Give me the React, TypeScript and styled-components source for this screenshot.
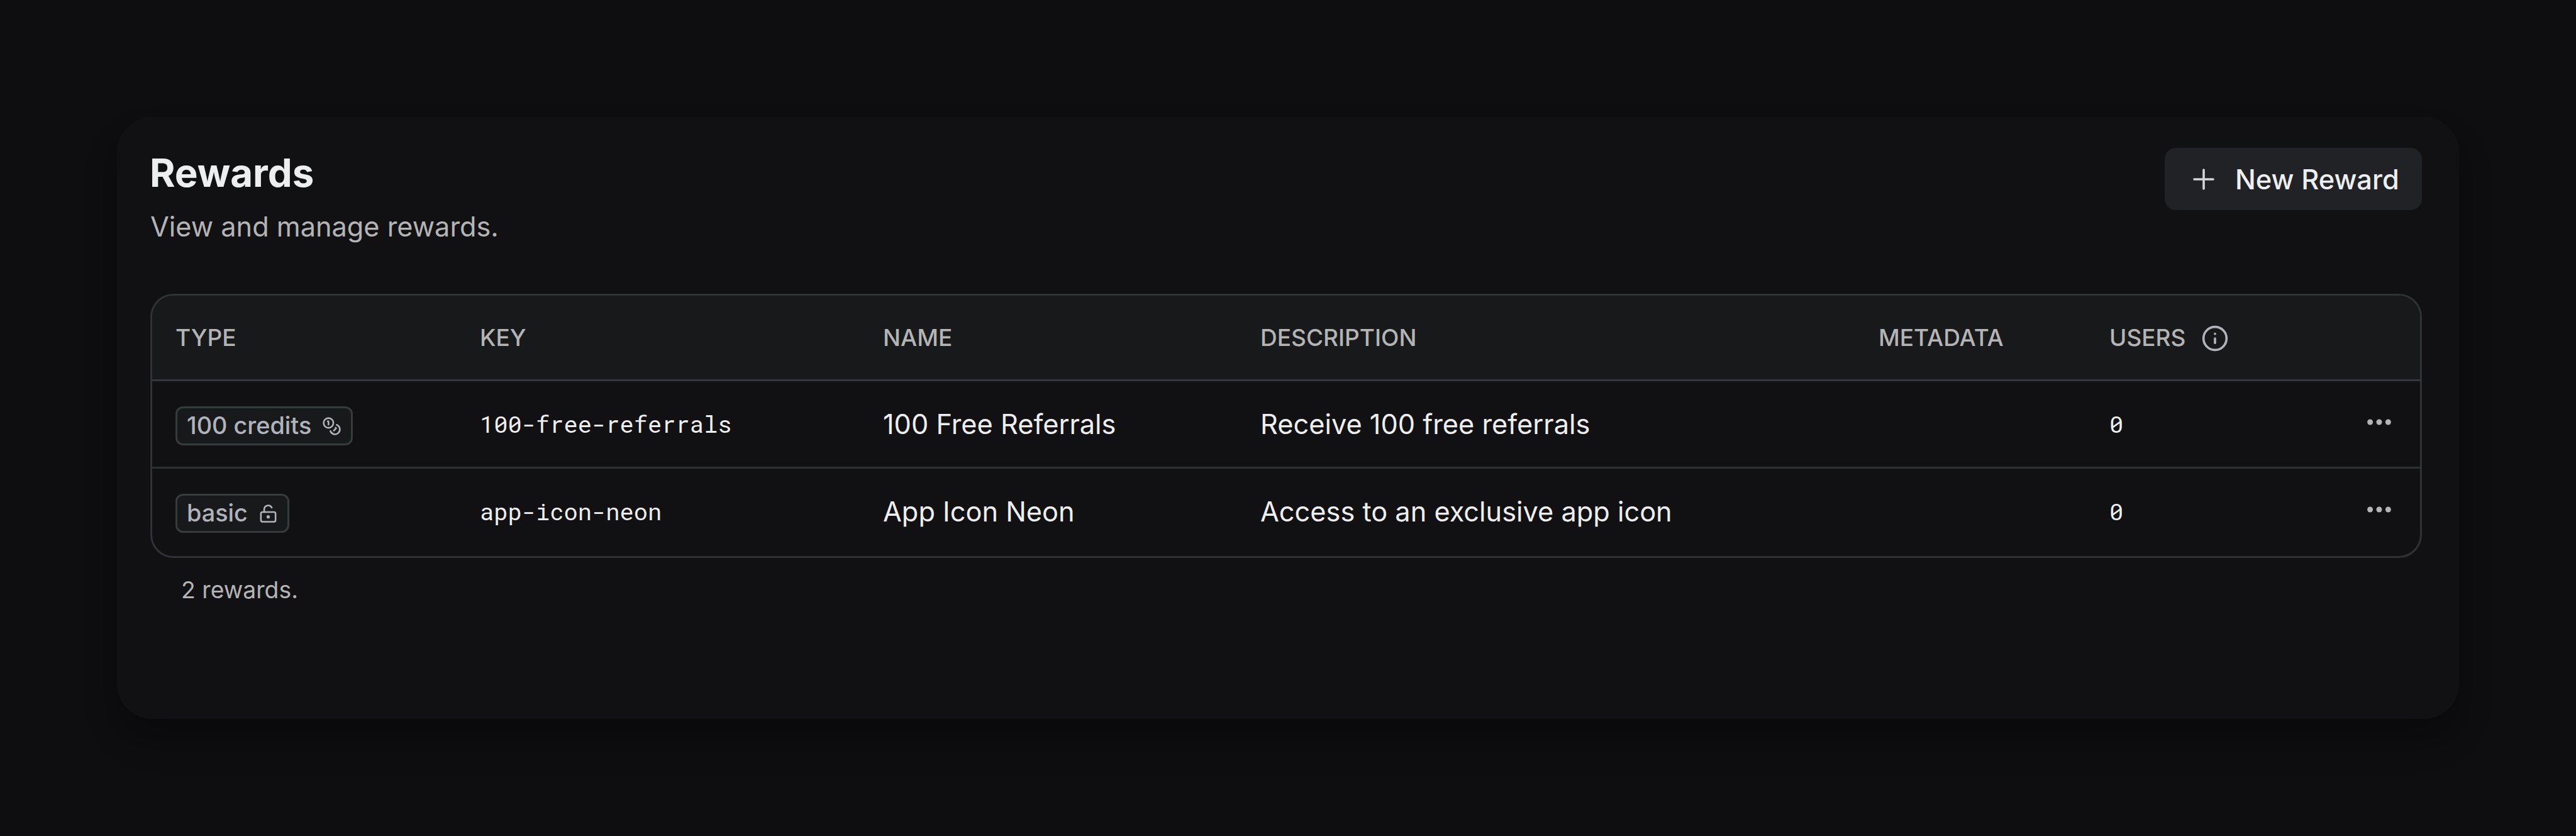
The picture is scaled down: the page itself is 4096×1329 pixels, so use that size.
import React from "react";
import styled, { createGlobalStyle } from "styled-components";
import { Coins, Info, LockKeyholeOpen } from "lucide-react";

const GlobalStyle = createGlobalStyle`
  * { box-sizing: border-box; }
  body {
    margin: 0;
    background: #0e0e10;
    color: #eeeeee;
    font-family: "Inter", "Liberation Sans", sans-serif;
    font-size: 43.3px;
  }
`;

const Page = styled.main`
  height: 1329px;
  padding: 186px;
  overflow: hidden;
`;

const Card = styled.section`
  width: 3724px;
  height: 957px;
  padding: 49px 59px 0 53px;
  border-radius: 56px;
  background: #111113;
  box-shadow: 0 34px 56px rgba(0, 0, 0, 0.18), 0 28px 50px -28px rgba(0, 0, 0, 0.3);
`;

const CardHeader = styled.header`
  display: flex;
  justify-content: space-between;
  align-items: flex-start;
  margin-bottom: 81px;
`;

const Heading = styled.div`
  display: flex;
  flex-direction: column;
  gap: 27px;
  padding-top: 8px;
`;

const Title = styled.h1`
  margin: 0 0 0 -1px;
  font-size: 61.8px;
  font-weight: 700;
  line-height: 64px;
  color: #edeef0;
`;

const Subtitle = styled.p`
  margin: 0;
  font-size: 43.25px;
  line-height: 52px;
  color: #b4b4b4;
`;

const NewButton = styled.button`
  display: flex;
  align-items: center;
  gap: 33px;
  width: 409px;
  height: 99px;
  padding: 0 0 0 45px;
  border: 0;
  border-radius: 18px;
  background: #212225;
  color: #edeef0;
  font-family: inherit;
  font-size: 43.4px;
  font-weight: 500;
  white-space: nowrap;
`;

const PlusIcon = styled.svg`
  stroke: #d4d5d7;
  stroke-width: 3.6;
  stroke-linecap: round;
`;

const Table = styled.div`
  border: 3px solid #303237;
  border-radius: 37px;
  overflow: hidden;
`;

const Row = styled.div`
  display: grid;
  grid-template-columns: 484px 641px 600px 983px 367px 1fr;
  padding: 0 45px 0 37px;
`;

const HeadRow = styled(Row)`
  align-items: center;
  height: 133px;
  background: #18191b;
`;

const BodyRow = styled(Row)<{ $first: boolean }>`
  align-items: baseline;
  height: ${(p) => (p.$first ? 139 : 142)}px;
  padding-top: 40px;
  border-top: 3px solid ${(p) => (p.$first ? "#35373c" : "#2d3134")};
`;

const HeadCell = styled.div`
  display: flex;
  align-items: center;
  gap: 25px;
  font-size: 37px;
  font-weight: 500;
  line-height: 46px;
  color: #b4b4b4;

  svg {
    color: #b0b4ba;
    margin-top: 2px;
  }
`;

const Cell = styled.div`
  line-height: 52px;
  white-space: nowrap;
`;

const MonoCell = styled(Cell)`
  align-self: start;
  padding-top: 2px;
  font-family: "Roboto Mono", "DejaVu Sans Mono", monospace;
  font-size: 37.1px;
`;

const Badge = styled.span`
  display: inline-flex;
  align-items: center;
  gap: 17px;
  height: 62px;
  padding: 0 15px;
  border: 3px solid #363c3e;
  border-radius: 12px;
  background: #18191b;
  color: #b0b4ba;
  font-size: 37.8px;
  font-weight: 500;
  line-height: 54px;
`;

const BadgeLabel = styled.span`
  padding-bottom: 2px;
`;

const UsersCell = styled.div`
  display: grid;
  grid-template-columns: auto 1fr;
  align-self: start;
  align-items: start;
`;

const Actions = styled.div`
  display: flex;
  justify-content: flex-end;
  padding-top: 19px;
`;

const MenuDots = styled.svg`
  fill: #b4b4b4;
`;

const Summary = styled.p`
  margin: 28px 0 0;
  padding-left: 49px;
  font-size: 37.3px;
  line-height: 46px;
  color: #b4b4b4;
`;

type Reward = {
  type: string;
  icon: React.ReactNode;
  key: string;
  name: string;
  description: string;
  users: number;
};

const rewards: Reward[] = [
  {
    type: "100 credits",
    icon: <Coins size={31} />,
    key: "100-free-referrals",
    name: "100 Free Referrals",
    description: "Receive 100 free referrals",
    users: 0,
  },
  {
    type: "basic",
    icon: <LockKeyholeOpen size={31} />,
    key: "app-icon-neon",
    name: "App Icon Neon",
    description: "Access to an exclusive app icon",
    users: 0,
  },
];

function RewardRow({ reward, first }: { reward: Reward; first: boolean }) {
  return (
    <BodyRow $first={first}>
      <Cell>
        <Badge>
          <BadgeLabel>{reward.type}</BadgeLabel>
          {reward.icon}
        </Badge>
      </Cell>
      <MonoCell>{reward.key}</MonoCell>
      <Cell>{reward.name}</Cell>
      <Cell>{reward.description}</Cell>
      <Cell />
      <UsersCell>
        <MonoCell>{reward.users}</MonoCell>
        <Actions>
          <MenuDots width="40" height="12" viewBox="0 0 40 12">
            <circle cx="5.6" cy="6" r="4.5" />
            <circle cx="20" cy="6" r="4.5" />
            <circle cx="34.4" cy="6" r="4.5" />
          </MenuDots>
        </Actions>
      </UsersCell>
    </BodyRow>
  );
}

export default function App() {
  return (
    <Page>
      <GlobalStyle />
      <Card>
        <CardHeader>
          <Heading>
            <Title>Rewards</Title>
            <Subtitle>View and manage rewards.</Subtitle>
          </Heading>
          <NewButton>
            <PlusIcon width="34" height="34" viewBox="0 0 34 34">
              <path d="M17 2v30M2 17h30" />
            </PlusIcon>
            New Reward
          </NewButton>
        </CardHeader>
        <Table>
          <HeadRow>
            <HeadCell>TYPE</HeadCell>
            <HeadCell>KEY</HeadCell>
            <HeadCell>NAME</HeadCell>
            <HeadCell>DESCRIPTION</HeadCell>
            <HeadCell>METADATA</HeadCell>
            <HeadCell>
              USERS
              <Info size={44} />
            </HeadCell>
          </HeadRow>
          {rewards.map((reward, i) => (
            <RewardRow key={reward.key} reward={reward} first={i === 0} />
          ))}
        </Table>
        <Summary>2 rewards.</Summary>
      </Card>
    </Page>
  );
}
